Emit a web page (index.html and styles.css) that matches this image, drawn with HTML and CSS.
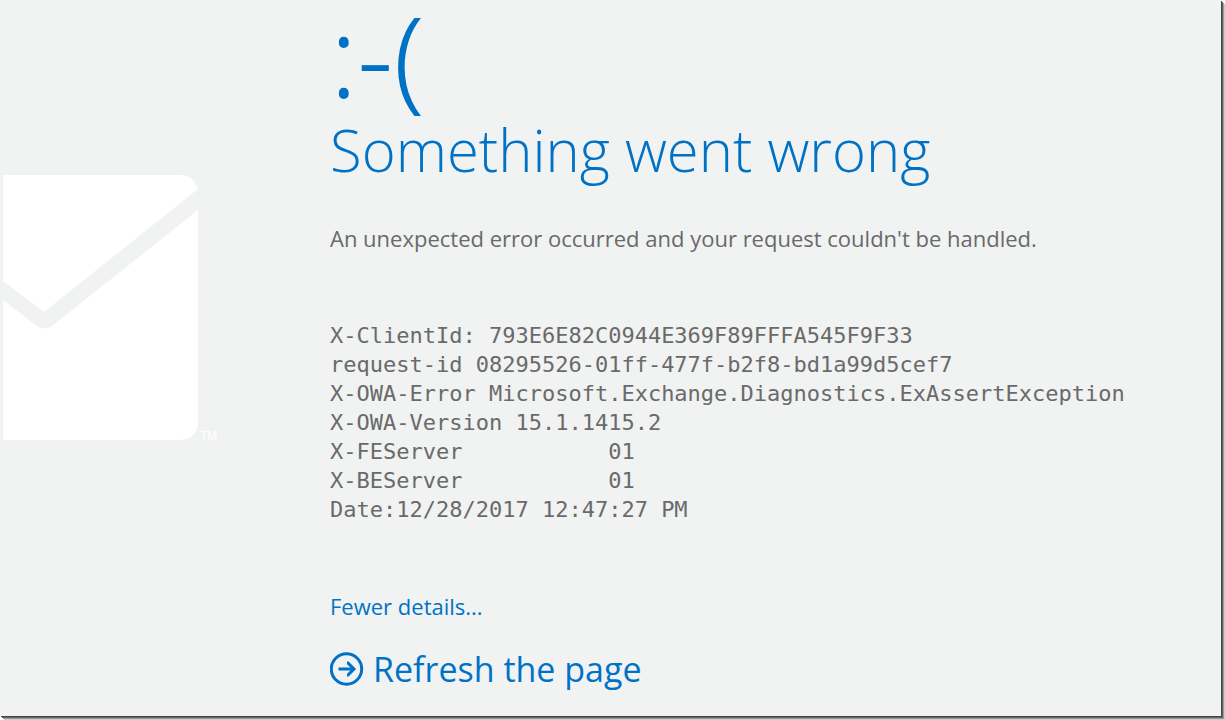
FILE: index.html
```html
<!DOCTYPE html>
<html lang="en">
<head>
    <meta charset="UTF-8">
    <meta name="viewport" content="width=device-width, initial-scale=1.0">
    <title>Something went wrong</title>
    <link rel="stylesheet" href="styles.css">
</head>
<body>
    <div class="page">
        <div class="side">
            <svg class="envelope" viewBox="0 0 220 270" aria-hidden="true">
                <path d="M1 0 H180 Q192 1 196 14 L42 137 L1 106 Z"/>
                <path d="M1 125 L35 151 Q42 156 50 151 L196 35 V249 Q194 264 178 265 H1 Z"/>
                <text x="198" y="265">TM</text>
            </svg>
        </div>

        <main class="content">
            <div class="face">:-(</div>
            <h1>Something went wrong</h1>
            <p class="message">An unexpected error occurred and your request couldn't be handled.</p>
<pre class="details">X-ClientId: 793E6E82C0944E369F89FFFA545F9F33
request-id 08295526-01ff-477f-b2f8-bd1a99d5cef7
X-OWA-Error Microsoft.Exchange.Diagnostics.ExAssertException
X-OWA-Version 15.1.1415.2
X-FEServer           01
X-BEServer           01
Date:12/28/2017 12:47:27 PM</pre>
            <a class="toggle" href="#">Fewer details...</a>
            <a class="refresh" href="#">
                <svg viewBox="0 0 34 34" aria-hidden="true">
                    <circle cx="16.500" cy="17" r="15.200"/>
                    <path d="M8.500 17 H24 M17 11 H18 L24 17 L18 23 H17"/>
                </svg>
                Refresh the page
            </a>
        </main>
    </div>
</body>
</html>
```
FILE: styles.css
```css
* {
    box-sizing: border-box;
}

body {
    margin: 0;
    padding: 0 4px 4px 0;
    background: #fff;
    font-family: "Open Sans", "Noto Sans", sans-serif;
    color: #6a6a6a;
}

.page {
    display: flex;
    min-height: calc(100vh - 4px);
    background: #f1f2f2;
    box-shadow: 1px 1px 0 #444, 2px 2px 0 #666, 3px 3px 0 #999, 4px 4px 0 #ccc;
}

.side {
    flex: 0 0 330px;
    padding: 175px 0 0 2px;
}

.envelope {
    display: block;
    width: 220px;
    fill: #fff;
}

.envelope text {
    font-family: "Liberation Sans", Arial, sans-serif;
    font-size: 12px;
}

.content {
    flex: 1;
    min-width: 0;
}

.face {
    font-family: "Noto Sans", "Open Sans", sans-serif;
    font-size: 112px;
    font-weight: 300;
    line-height: 110px;
    color: #0072c6;
}

h1 {
    margin: 0;
    font-size: 58px;
    font-weight: 300;
    line-height: 80px;
    color: #0072c6;
}

.message {
    margin: 32px 0 0;
    font-size: 22px;
    line-height: 32px;
}

.details {
    margin: 67px 0 0;
    font-family: "DejaVu Sans Mono", Consolas, monospace;
    font-size: 22px;
    line-height: 29px;
}

.toggle {
    display: block;
    width: fit-content;
    margin-top: 66px;
    font-size: 22px;
    line-height: 32px;
    color: #0072c6;
    text-decoration: none;
}

.refresh {
    display: flex;
    align-items: center;
    gap: 9px;
    width: fit-content;
    margin-top: 24px;
    font-size: 34px;
    line-height: 46px;
    color: #0072c6;
    text-decoration: none;
}

.refresh svg {
    width: 34px;
    height: 34px;
    fill: none;
    stroke: #0072c6;
    stroke-width: 3;
}
```
